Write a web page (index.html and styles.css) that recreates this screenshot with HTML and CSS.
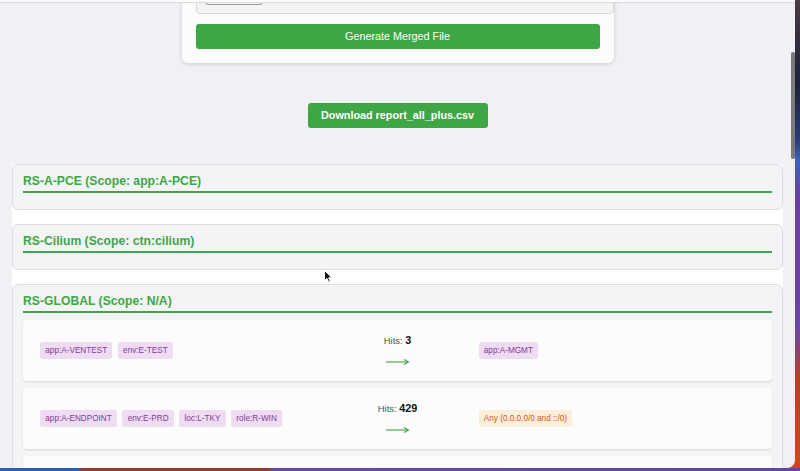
FILE: index.html
```html
<!DOCTYPE html>
<html lang="en">
<head>
<meta charset="utf-8">
<title>Merge Rules</title>
<link rel="stylesheet" href="styles.css">
</head>
<body>
<div class="window">
  <div class="topbar"></div>
  <div class="viewport">
    <div class="content">
      <div class="card">
        <div class="dropbox">
          <div class="filebtn"></div>
        </div>
        <button class="btn btn-wide">Generate Merged File</button>
      </div>

      <button class="btn btn-download">Download report_all_plus.csv</button>

      <div class="sections">
        <section class="ruleset">
          <h2 class="ruleset-title">RS-A-PCE (Scope: app:A-PCE)</h2>
          <div class="rules"></div>
        </section>
        <section class="ruleset">
          <h2 class="ruleset-title">RS-Cilium (Scope: ctn:cilium)</h2>
          <div class="rules"></div>
        </section>
        <section class="ruleset">
          <h2 class="ruleset-title">RS-GLOBAL (Scope: N/A)</h2>
          <div class="rules">
            <div class="rule">
              <div class="side">
                <span class="tag">app:A-VENTEST</span>
                <span class="tag">env:E-TEST</span>
              </div>
              <div class="mid">
                <div class="hits">Hits: <b>3</b></div>
                <svg class="arrow" width="24" height="8" viewBox="0 0 24 8"><path d="M0 4H22" stroke="#3fa646" stroke-width="1.1" fill="none"/><path d="M18 1.5L22.5 4L18 6.5" stroke="#3fa646" stroke-width="1.1" fill="none"/></svg>
              </div>
              <div class="side">
                <span class="tag">app:A-MGMT</span>
              </div>
            </div>
            <div class="rule">
              <div class="side">
                <span class="tag">app:A-ENDPOINT</span>
                <span class="tag">env:E-PRD</span>
                <span class="tag">loc:L-TKY</span>
                <span class="tag">role:R-WIN</span>
              </div>
              <div class="mid">
                <div class="hits">Hits: <b>429</b></div>
                <svg class="arrow" width="24" height="8" viewBox="0 0 24 8"><path d="M0 4H22" stroke="#3fa646" stroke-width="1.1" fill="none"/><path d="M18 1.5L22.5 4L18 6.5" stroke="#3fa646" stroke-width="1.1" fill="none"/></svg>
              </div>
              <div class="side">
                <span class="tag tag-any">Any (0.0.0.0/0 and ::/0)</span>
              </div>
            </div>
            <div class="rule"></div>
          </div>
        </section>
      </div>
    </div>
  </div>
  <div class="scrollbar"></div>
  <svg class="cursor" width="9" height="13" viewBox="0 0 9 13"><path d="M0.5 0.5V10.5L3 8.3L4.8 12.2L6.4 11.5L4.6 7.7H7.8Z" fill="#111" stroke="#fff" stroke-width="0.9" stroke-linejoin="round"/></svg>
</div>
</body>
</html>
```

FILE: styles.css
```css
* { box-sizing: border-box; }

html, body {
  margin: 0;
  height: 100%;
}

body {
  font-family: "Liberation Sans", Arial, sans-serif;
  background:
    linear-gradient(to right, #2f5fa8 0, #2f5fa8 78px, #8a3e2e 82px, #8a3e2e 268px, #6a4c9c 274px, #5e4a98 100%) bottom left / 100% 3px no-repeat,
    linear-gradient(to bottom, #4a3a44 0, #1c2138 18%, #2a3d78 30%, #3d62b8 34%, #6a3fa0 42%, #6b46a2 70%, #b5402a 80%, #d2461e 100%);
  overflow: hidden;
}

.window {
  position: relative;
  width: 795px;
  height: 468px;
  background: #f0f0f5;
  border-bottom-right-radius: 8px;
  overflow: hidden;
  display: flex;
  flex-direction: column;
}

.topbar {
  flex: 0 0 3px;
  background: #fafafa;
  border-bottom: 1px solid #dadada;
}

.viewport {
  flex: 1;
  overflow: hidden;
}

.content {
  display: flex;
  flex-direction: column;
  align-items: center;
}

.card {
  width: 432px;
  margin-top: -41px;
  padding: 14px 14px 14px;
  background: #fcfcfc;
  border-radius: 6px;
  box-shadow: 0 1px 4px rgba(0, 0, 0, 0.16);
}

.dropbox {
  box-sizing: content-box;
  width: 100%;
  height: 20px;
  padding: 8px 6px;
  background: #f4f4f6;
  border: 1px solid #d6d6d8;
  border-radius: 4px;
}

.filebtn {
  width: 58px;
  height: 20px;
  margin-left: 2px;
  border: 1.5px solid #9a9a9a;
  border-radius: 3px;
  background: #f5f5f5;
}

.btn {
  font-family: "Liberation Sans", Arial, sans-serif;
  font-size: 10.8px;
  line-height: 13px;
  color: #fff;
  background: #3fa646;
  border: none;
  border-radius: 3px;
  padding: 6px 14px;
  height: 25px;
}

.btn-wide {
  display: block;
  width: 404px;
  margin-top: 10px;
}

.btn-download {
  margin-top: 40px;
  width: 180px;
  font-weight: bold;
  padding: 6px 0;
}

.sections {
  align-self: stretch;
  margin: 36px 12px 0;
  background: #fff;
  display: flex;
  flex-direction: column;
  gap: 14px;
}

.ruleset {
  background: #f3f4f6;
  border: 1px solid #dedee0;
  border-radius: 6px;
  padding: 8px 10px 9px;
}

.ruleset-title {
  margin: 0;
  font-size: 12.2px;
  line-height: 16px;
  font-weight: bold;
  color: #3fa646;
  padding-bottom: 2px;
  border-bottom: 2px solid #3fa646;
}

.rules {
  padding-top: 7px;
  display: flex;
  flex-direction: column;
  gap: 7px;
}

.rule {
  height: 61px;
  background: #fcfcfc;
  border-radius: 4px;
  box-shadow: 0 1px 2px rgba(0, 0, 0, 0.12);
  display: grid;
  grid-template-columns: 1fr 162px 1fr;
  align-items: center;
  padding: 0 17px;
}

.side {
  display: flex;
  flex-wrap: wrap;
  gap: 5.3px;
}

.tag {
  font-size: 8.2px;
  line-height: 9px;
  padding: 4px 5.3px;
  border-radius: 2.7px;
  background: #f0dcf2;
  color: #7d3c98;
}

.tag-any {
  background: #fcefd9;
  color: #e0502a;
}

.mid {
  display: flex;
  flex-direction: column;
  align-items: center;
  margin-top: -2px;
}

.hits {
  font-size: 9.5px;
  line-height: 13px;
  color: #555;
}

.hits b {
  font-size: 10.8px;
  color: #111;
}

.arrow {
  display: block;
  margin-top: 11px;
}

.scrollbar {
  position: absolute;
  right: 0;
  top: 52px;
  width: 4px;
  height: 107px;
  border-radius: 2px;
  background: #7a7a7a;
}

.cursor {
  position: absolute;
  left: 324px;
  top: 270px;
}
```
